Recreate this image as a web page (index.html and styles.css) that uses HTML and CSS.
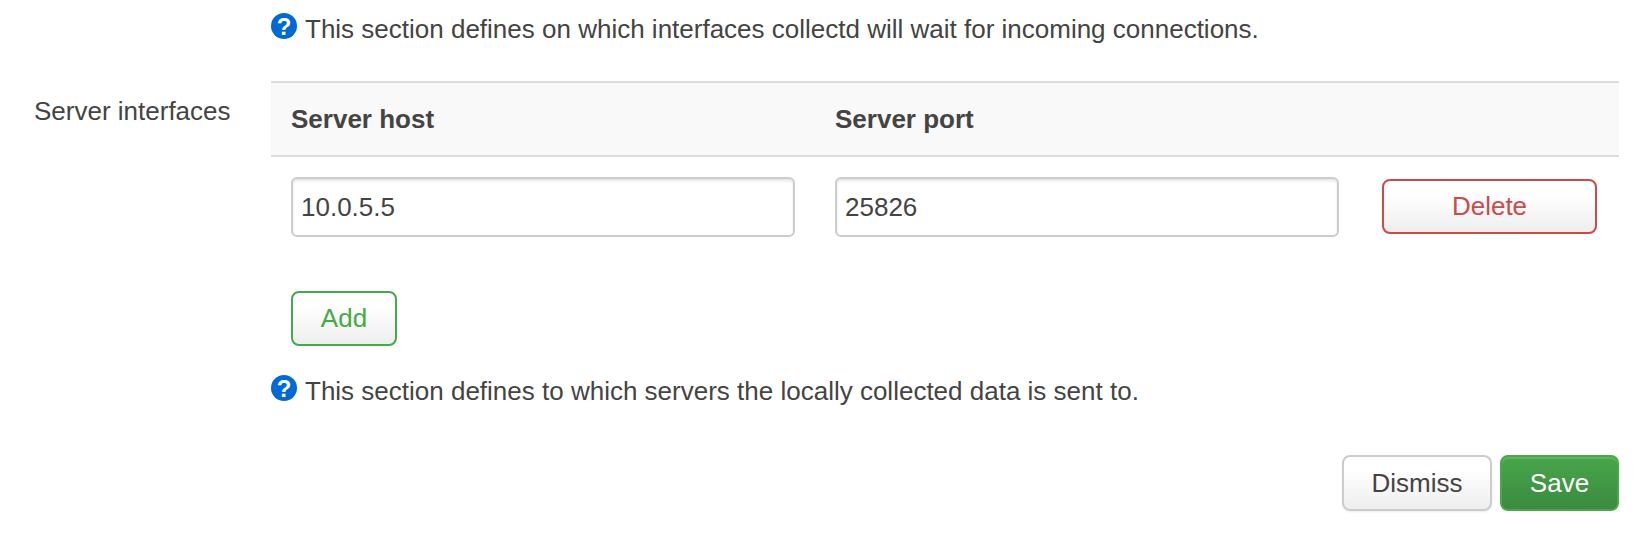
FILE: index.html
```html
<!DOCTYPE html>
<html lang="en">
<head>
<meta charset="utf-8">
<title>Server interfaces</title>
<link rel="stylesheet" href="styles.css">
</head>
<body>
<div class="page">
  <div class="field">
    <div class="label"></div>
    <div class="value">
      <p class="help help-top">
        <svg class="icon" viewBox="0 0 26 26"><circle cx="13" cy="13" r="13" fill="#0069d6"/><text x="13" y="21.5" text-anchor="middle" class="qm">?</text></svg>
        <span>This section defines on which interfaces collectd will wait for incoming connections.</span>
      </p>
    </div>
  </div>
  <div class="field">
    <div class="label label-server">Server interfaces</div>
    <div class="value">
      <div class="table">
        <div class="thead">
          <div class="th">Server host</div>
          <div class="th">Server port</div>
          <div class="th"></div>
        </div>
        <div class="tr">
          <div class="td"><input class="input" type="text" value="10.0.5.5"></div>
          <div class="td"><input class="input" type="text" value="25826"></div>
          <div class="td td-action"><button class="btn btn-delete" type="button">Delete</button></div>
        </div>
      </div>
      <div class="add-row"><button class="btn btn-add" type="button">Add</button></div>
      <p class="help help-bottom">
        <svg class="icon" viewBox="0 0 26 26"><circle cx="13" cy="13" r="13" fill="#0069d6"/><text x="13" y="21.5" text-anchor="middle" class="qm">?</text></svg>
        <span>This section defines to which servers the locally collected data is sent to.</span>
      </p>
    </div>
  </div>
  <div class="actions">
    <button class="btn btn-dismiss" type="button">Dismiss</button>
    <button class="btn btn-save" type="button">Save</button>
  </div>
</div>
</body>
</html>
```
FILE: styles.css
```css
* { box-sizing: border-box; }
html, body { margin: 0; padding: 0; background: #fff; }
body {
  font-family: "Liberation Sans", Arial, sans-serif;
  font-size: 26px;
  color: #444;
  width: 1641px;
  height: 534px;
  overflow: hidden;
}
.page { padding: 0 22px 0 0; }
.field { display: flex; }
.label { width: 271px; flex: none; padding-left: 34px; }
.label-server { line-height: 60px; height: 60px; }
.value { flex: 1; min-width: 0; }
.help { margin: 0; display: flex; align-items: flex-start; line-height: 36px; }
.help-top { height: 81px; padding-top: 11px; }
.help-bottom { margin-top: 26px; height: 36px; }
.help span { display: block; margin-left: 8px; }
.icon { width: 26px; height: 26px; flex: none; margin-top: 2px; }
.qm { font-family: "Liberation Sans", Arial, sans-serif; font-size: 24px; font-weight: 700; fill: #fff; }
.table { width: 100%; }
.thead, .tr { display: grid; grid-template-columns: 544px 544px 1fr; }
.thead {
  height: 76px;
  background: #f9f9f9;
  border-top: 2px solid #ddd;
  border-bottom: 2px solid #ddd;
}
.th { padding-left: 20px; font-weight: 700; line-height: 72px; }
.tr { height: 134px; align-items: start; }
.td { padding: 20px 20px 0; }
.td-action { padding: 22px 22px 0 23px; }
.input {
  display: block;
  width: 100%;
  height: 60px;
  padding: 0 8px;
  border: 2px solid #ccc;
  border-radius: 6px;
  font: inherit;
  color: #444;
  background: #fff;
  box-shadow: inset 0 2px 3px rgba(0,0,0,.1);
  outline: none;
}
.btn {
  display: block;
  height: 56px;
  border-radius: 8px;
  border: 2px solid #ccc;
  font: inherit;
  background: linear-gradient(#fff 25%, #eee);
  color: #444;
  padding: 0;
}
.btn-delete { width: 100%; height: 55px; border-color: #cb4a4a; color: #cb4a4a; }
.btn-add { width: 106px; height: 55px; margin-left: 20px; border-color: #46aa46; color: #46aa46; }
.add-row { height: 56px; }
.actions { display: flex; justify-content: flex-end; gap: 8px; margin-top: 46px; }
.btn-dismiss { width: 150px; box-shadow: 0 1px 2px rgba(0,0,0,.08); }
.btn-save {
  width: 119px;
  border-color: #4aa84a;
  color: #fff;
  background: linear-gradient(#47a64a, #3b8a40);
  box-shadow: inset 0 2px 0 rgba(255,255,255,.15);
}
```
